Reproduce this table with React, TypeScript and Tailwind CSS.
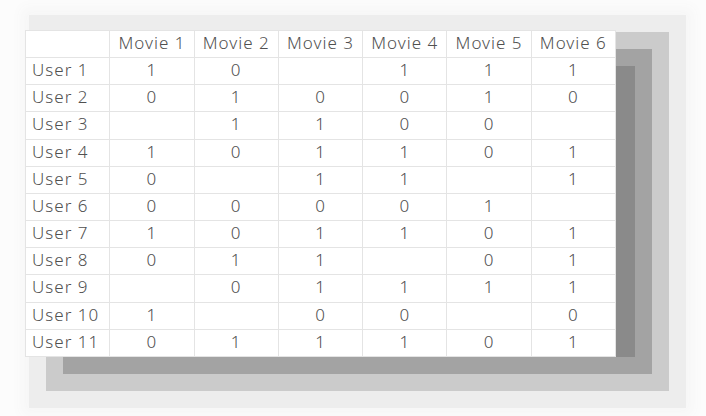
const movies = ['Movie 1', 'Movie 2', 'Movie 3', 'Movie 4', 'Movie 5', 'Movie 6'];

const ratings: string[][] = [
  ['1', '0', '', '1', '1', '1'],
  ['0', '1', '0', '0', '1', '0'],
  ['', '1', '1', '0', '0', ''],
  ['1', '0', '1', '1', '0', '1'],
  ['0', '', '1', '1', '', '1'],
  ['0', '0', '0', '0', '1', ''],
  ['1', '0', '1', '1', '0', '1'],
  ['0', '1', '1', '', '0', '1'],
  ['', '0', '1', '1', '1', '1'],
  ['1', '', '0', '0', '', '0'],
  ['0', '1', '1', '1', '0', '1'],
];

export default function App() {
  return (
    <div className="w-[706px] h-[416px] overflow-hidden bg-[#fcfcfc] pt-[30px] pl-[25px]">
      <table
        className="w-[591px] h-[327px] table-fixed border-collapse bg-white text-[17px] font-light tracking-[1px] text-[#505050] shadow-[37px_18px_0_-18px_#8a8a8a,37px_18px_0_-1px_#a3a3a3,37px_18px_0_16px_#cbcbcb,37px_18px_0_33px_#ededed,37px_18px_12px_40px_#f6f6f6]"
        style={{ fontFamily: '"Noto Sans", "Open Sans", sans-serif' }}
      >
        <thead>
          <tr className="h-[27px]">
            <th className="border border-[#e4e4e4] font-light" />
            {movies.map((m) => (
              <th key={m} className="border border-[#e4e4e4] pb-[3px] font-light text-center leading-none whitespace-nowrap">
                {m}
              </th>
            ))}
          </tr>
        </thead>
        <tbody>
          {ratings.map((row, i) => (
            <tr key={i} className="h-[27px]">
              <td className="border border-[#e4e4e4] pl-[6px] pb-[3px] text-left leading-none whitespace-nowrap">
                User {i + 1}
              </td>
              {row.map((v, j) => (
                <td key={j} className="border border-[#e4e4e4] pb-[3px] text-center leading-none">
                  {v}
                </td>
              ))}
            </tr>
          ))}
        </tbody>
      </table>
    </div>
  );
}
